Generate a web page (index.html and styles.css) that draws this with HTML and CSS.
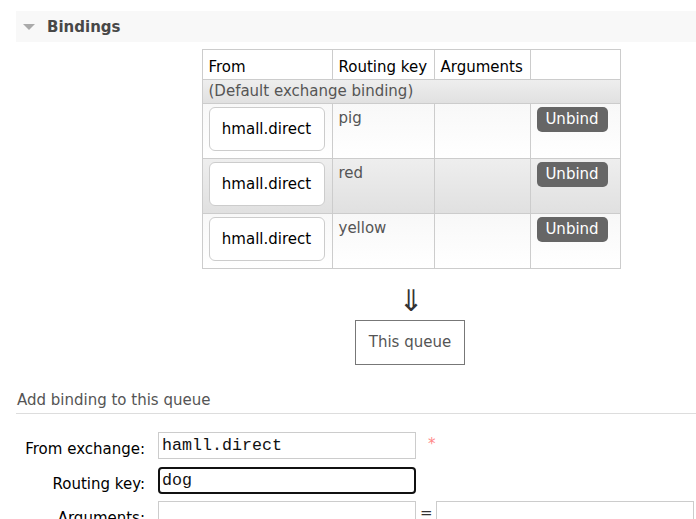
FILE: index.html
```html
<!DOCTYPE html>
<html>
<head>
<meta charset="utf-8">
<link rel="stylesheet" href="styles.css">
</head>
<body>
<div class="page">
  <div class="section">
    <h2 class="section-head"><span class="tri"></span>Bindings</h2>
    <div class="section-body">
      <table class="list">
        <colgroup>
          <col class="c-from"><col class="c-key"><col class="c-args"><col class="c-act">
        </colgroup>
        <thead>
          <tr><th>From</th><th>Routing key</th><th>Arguments</th><th></th></tr>
        </thead>
        <tbody>
          <tr class="alt1 default"><td colspan="4">(Default exchange binding)</td></tr>
          <tr class="alt2">
            <td><span class="xchg">hmall.direct</span></td>
            <td class="key">pig</td>
            <td></td>
            <td><button class="unbind">Unbind</button></td>
          </tr>
          <tr class="alt1">
            <td><span class="xchg">hmall.direct</span></td>
            <td class="key">red</td>
            <td></td>
            <td><button class="unbind">Unbind</button></td>
          </tr>
          <tr class="alt2">
            <td><span class="xchg">hmall.direct</span></td>
            <td class="key">yellow</td>
            <td></td>
            <td><button class="unbind">Unbind</button></td>
          </tr>
        </tbody>
      </table>
      <div class="arrow">⇓</div>
      <div class="this-queue">This queue</div>
    </div>
  </div>

  <h3 class="sub">Add binding to this queue</h3>
  <div class="form">
    <label class="form-label">From exchange:</label>
    <div class="form-field"><input class="text" type="text" value="hamll.direct"><span class="mand">*</span></div>
    <label class="form-label">Routing key:</label>
    <div class="form-field"><input class="text focused" type="text" value="dog"></div>
    <label class="form-label">Arguments:</label>
    <div class="form-field"><input class="text" type="text" value=""><span class="eq">=</span><input class="text" type="text" value=""></div>
  </div>
</div>
</body>
</html>
```

FILE: styles.css
```css
html, body {
  margin: 0;
  overflow: hidden;
  background: #fff;
}
body {
  font-family: "DejaVu Sans", Verdana, sans-serif;
  font-size: 15px;
  color: #333;
}
.page {
  width: 790px;
  padding: 11px 0 0 16px;
}
.section-head {
  display: flex;
  align-items: center;
  height: 31px;
  margin: 0;
  padding-left: 7px;
  width: 673px;
  background: #f8f8f8;
  font-size: 15px;
  font-weight: bold;
  color: #484848;
  gap: 12px;
}
.tri {
  width: 0;
  height: 0;
  border-left: 6.5px solid transparent;
  border-right: 6.5px solid transparent;
  border-top: 6px solid #aaa;
}
.list {
  border-collapse: collapse;
  table-layout: fixed;
  width: 418px;
  margin: 7px auto 0;
  color: #000;
}
.c-from { width: 130px; }
.c-key { width: 102px; }
.c-args { width: 96px; }
.c-act { width: 90px; }
.list th, .list td {
  border: 1px solid #ccc;
  padding: 3px 6px;
  text-align: left;
  vertical-align: top;
  line-height: 17.5px;
}
.list th {
  font-weight: normal;
  height: 23px;
  padding: 6px 6px 0;
  vertical-align: middle;
  background: #fff;
}
.list tbody td {
  height: 48px;
}
.list tr.default td {
  height: 19px;
  padding: 2px 6px 2px;
  color: #555;
  vertical-align: middle;
}
.alt1 { background: linear-gradient(#eee, #e0e0e0); }
.alt2 { background: linear-gradient(#f8f8f8, #fff); }
.list td.key {
  color: #555;
  padding-top: 6px;
  padding-bottom: 0;
}
.xchg {
  display: block;
  box-sizing: border-box;
  width: 116px;
  height: 44px;
  line-height: 42px;
  text-align: center;
  border: 1px solid #ccc;
  border-radius: 6px;
  background: #fff;
  color: #000;
}
.unbind {
  display: block;
  box-sizing: border-box;
  width: 71px;
  height: 25px;
  padding: 0;
  border: 0;
  border-radius: 5px;
  background: #666;
  color: #fff;
  font-family: "DejaVu Sans", Verdana, sans-serif;
  font-size: 15px;
  line-height: 25px;
  text-align: center;
}
.arrow {
  text-align: center;
  font-size: 30px;
  line-height: 26px;
  height: 26px;
  margin: 19px 0 6px;
  color: #333;
}
.this-queue {
  width: fit-content;
  margin: 0 auto;
  box-sizing: border-box;
  height: 45px;
  padding: 13px 12.5px 12px;
  border: 1px solid #777;
  line-height: 17px;
  color: #555;
  transform: translateX(-1px);
}
.sub {
  margin: 23px 0 0;
  padding: 4px 1px 3.5px;
  font-size: 15px;
  font-weight: normal;
  line-height: 17.5px;
  color: #555;
  border-bottom: 1px solid #ddd;
  width: 678px;
}
.form {
  display: grid;
  grid-template-columns: 129px 1fr;
  column-gap: 13px;
  row-gap: 7.5px;
  margin-top: 18px;
}
.form-label {
  text-align: right;
  padding-top: 9px;
  line-height: 17.5px;
  color: #000;
}
.form-field {
  display: flex;
  align-items: flex-start;
}
.text {
  box-sizing: border-box;
  width: 258px;
  height: 27px;
  margin: 0;
  padding: 1px 3px;
  border: 1px solid #ccc;
  border-radius: 0;
  font-family: "Liberation Mono", "Courier New", monospace;
  font-size: 16.67px;
  color: #111;
  outline: none;
}
.text.focused {
  border: 2px solid #111;
  border-radius: 4px;
  padding: 0 2px;
  height: 27px;
}
.mand {
  color: #f88;
  margin-left: 12px;
  padding-top: 3px;
}
.eq {
  margin: 4px 3px 0 4px;
  color: #333;
  line-height: 17.5px;
}
```
